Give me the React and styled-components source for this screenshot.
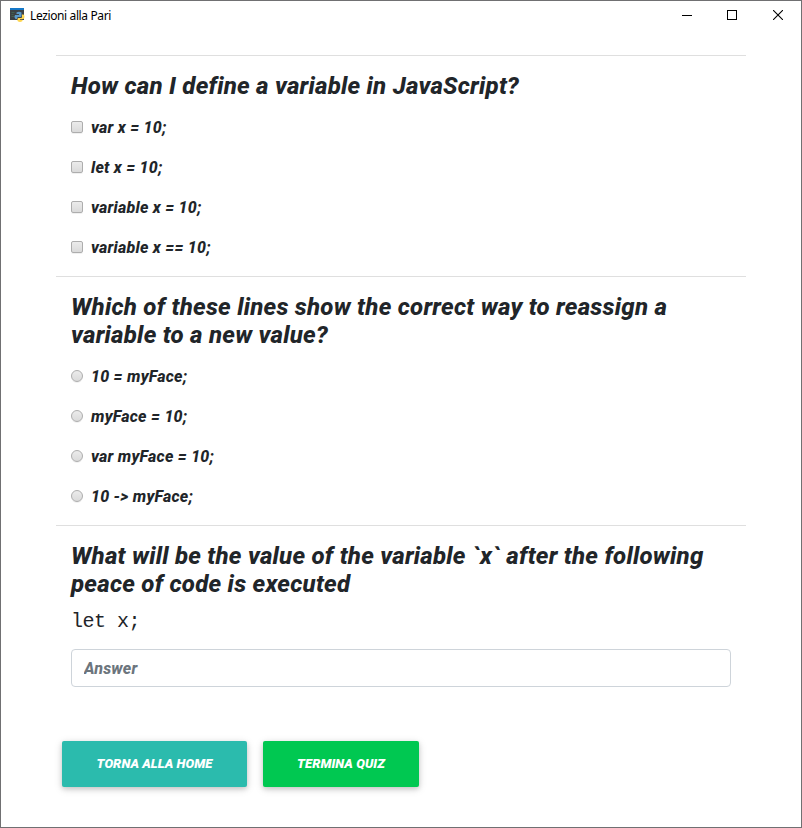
import React from 'react';
import styled, { createGlobalStyle } from 'styled-components';

const GlobalStyle = createGlobalStyle`
  *, *::before, *::after { box-sizing: border-box; }
  body { margin: 0; background: #fff; }
`;

const Window = styled.div`
  width: 802px;
  height: 828px;
  border: 1px solid #707072;
  background: #fff;
  color: #212529;
  font-family: Roboto, sans-serif;
  overflow: hidden;
`;

const TitleBar = styled.header`
  display: flex;
  align-items: center;
  height: 30px;
  padding-left: 8px;
  color: #000;
`;

const AppIcon = styled.svg`
  width: 16px;
  height: 16px;
  margin: 0 5px 2px 0;
`;

const WindowTitle = styled.span`
  font: 12px/16px "Noto Sans", sans-serif;
  letter-spacing: -0.38px;
  flex: 1;
`;

const WindowControl = styled.button`
  display: flex;
  align-items: center;
  justify-content: center;
  width: ${(p) => (p.$last ? '46px' : '45px')};
  height: 30px;
  margin: 0 0 2px;
  padding: 0 ${(p) => (p.$last ? '0' : '1px')} 0 0;
  border: 0;
  background: none;
`;

const Quiz = styled.main`
  width: 690px;
  margin: 24px 0 0 55px;
`;

const Question = styled.section`
  border-top: 1px solid #dfdfdf;
  padding: 16px 15px 9px;
`;

const Heading = styled.h4`
  margin: 0 0 7px;
  font-size: 24px;
  line-height: 28px;
  font-weight: 800;
  font-style: italic;
  letter-spacing: 0.25px;
  white-space: nowrap;
`;

const Option = styled.label`
  display: flex;
  align-items: center;
  height: 40px;
  font-size: 16px;
  line-height: 24px;
  font-weight: 800;
  font-style: italic;
  letter-spacing: 0.24px;
`;

const OptionText = styled.span`
  padding-top: 2px;
`;

const Choice = styled.input`
  appearance: none;
  width: 12px;
  height: 12px;
  margin: 0 8px 0 0;
  border: 1px solid #adadad;
  border-radius: ${(p) => (p.type === 'radio' ? '50%' : '2px')};
  background: linear-gradient(#ebebeb, #dadada);
  box-shadow: 0 1px 0 rgba(0, 0, 0, 0.06);
`;

const Code = styled.pre`
  margin: 10px 0 13px;
  font: 20px/28px "Liberation Mono", monospace;
  letter-spacing: -0.5px;
`;

const Answer = styled.input`
  display: block;
  width: 100%;
  height: 38px;
  padding: 6px 12px;
  border: 1px solid #ced4da;
  border-radius: 4px;
  font: italic 800 16px/24px Roboto, sans-serif;
  letter-spacing: 0.15px;
  color: #495057;
  &::placeholder { color: #6c757d; opacity: 1; }
`;

const Actions = styled.div`
  display: flex;
  gap: 16px;
  margin: 45px 0 0 6px;
`;

const ActionButton = styled.button`
  width: ${(p) => p.$width};
  height: 46px;
  padding: 0;
  border: 0;
  border-radius: 2px;
  background: ${(p) => p.$color};
  color: #fff;
  font: italic 900 12.96px/20px Roboto, sans-serif;
  letter-spacing: 0.06px;
  text-transform: uppercase;
  white-space: nowrap;
  box-shadow: 0 2px 5px rgba(0, 0, 0, 0.16), 0 2px 10px rgba(0, 0, 0, 0.12);
`;

const questions = [
  {
    type: 'checkbox',
    lines: ['How can I define a variable in JavaScript?'],
    options: ['var x = 10;', 'let x = 10;', 'variable x = 10;', 'variable x == 10;'],
  },
  {
    type: 'radio',
    lines: ['Which of these lines show the correct way to reassign a', 'variable to a new value?'],
    options: ['10 = myFace;', 'myFace = 10;', 'var myFace = 10;', '10 -> myFace;'],
  },
];

export default function App() {
  return (
    <>
      <GlobalStyle />
      <Window>
        <TitleBar>
          <AppIcon viewBox="0 0 16 16">
            <path fill="#3c4145" d="M1 1h14v12H1z" />
            <path fill="#1578c8" d="M1 1h14v2H1z" />
            <path stroke="#467354" strokeWidth=".7" d="M2.500 5.500h3M2.500 7.500h2M2.500 9.500h3" />
            <path fill="#5a9acb" d="M7.500 5.500Q10 4 12.500 5.500V9q0 1-1 1H9q-1 0-1 2H6.500Q4.500 10 6 8h4V7H7.500z" />
            <path fill="#ffd64f" d="M13 7.500h1.500q2 2 0 4.500H11v.7h2.500V14q-2.500 2-5 0v-2q0-1 1-1H12q1 0 1-1z" />
          </AppIcon>
          <WindowTitle>Lezioni alla Pari</WindowTitle>
          <WindowControl aria-label="Minimize">
            <svg width="10" height="10" shapeRendering="crispEdges"><path d="M0 5.500h10" stroke="#000" /></svg>
          </WindowControl>
          <WindowControl aria-label="Maximize">
            <svg width="10" height="10" shapeRendering="crispEdges"><path d="M.5.5h9v9h-9z" fill="none" stroke="#000" /></svg>
          </WindowControl>
          <WindowControl aria-label="Close" $last>
            <svg width="10" height="10"><path d="M0 0l10 10M10 0L0 10" stroke="#000" strokeWidth="1.1" /></svg>
          </WindowControl>
        </TitleBar>
        <Quiz>
          {questions.map((q) => (
            <Question key={q.type}>
              <Heading>
                {q.lines.map((line, i) => (
                  <React.Fragment key={line}>{i > 0 && <br />}{line}</React.Fragment>
                ))}
              </Heading>
              {q.options.map((text) => (
                <Option key={text}>
                  <Choice type={q.type} name={q.type} />
                  <OptionText>{text}</OptionText>
                </Option>
              ))}
            </Question>
          ))}
          <Question>
            <Heading>
              What will be the value of the variable `x` after the following<br />
              peace of code is executed
            </Heading>
            <Code>let x;</Code>
            <Answer placeholder="Answer" />
          </Question>
          <Actions>
            <ActionButton $width="185px" $color="#2bbbad">Torna alla home</ActionButton>
            <ActionButton $width="156px" $color="#00c851">Termina quiz</ActionButton>
          </Actions>
        </Quiz>
      </Window>
    </>
  );
}
